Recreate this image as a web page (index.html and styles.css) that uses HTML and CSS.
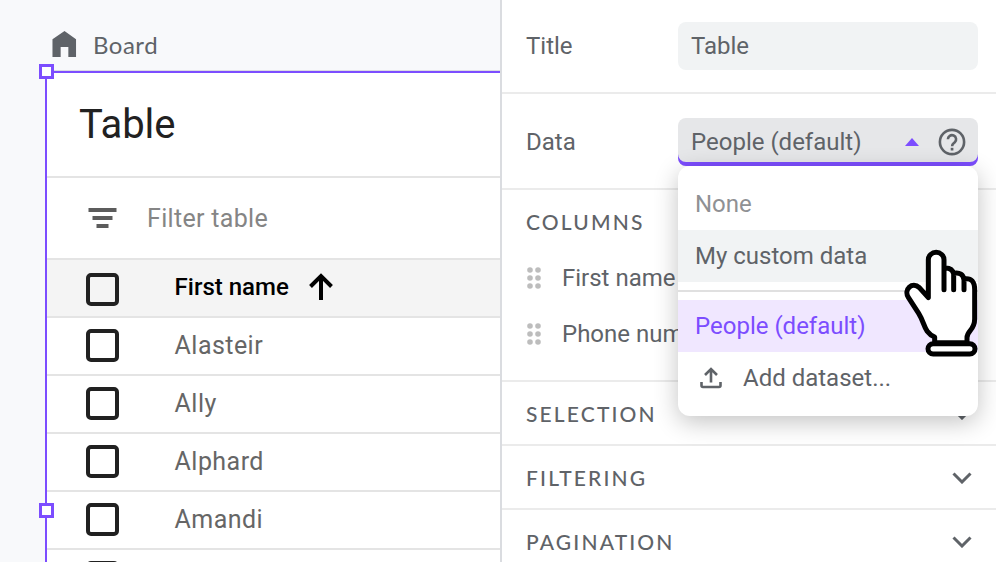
FILE: index.html
```html
<!DOCTYPE html>
<html lang="en">
<head>
<meta charset="utf-8">
<title>Board editor</title>
<link rel="stylesheet" href="styles.css">
</head>
<body>
<div class="app">
  <main class="canvas">
    <div class="crumb">
      <svg class="home" viewBox="0 0 26 28"><path d="M13 .5 25 9v18.500h-8V17H9v10.500H.5V9z"/></svg>
      <span>Board</span>
    </div>
    <section class="table-card">
      <i class="handle handle-corner"></i>
      <i class="handle handle-side"></i>
      <h1 class="table-title"><span>Table</span></h1>
      <div class="filter">
        <svg class="filter-icon" viewBox="0 0 28 20"><path d="M0 0h28v4H0zM4 8h20v4H4zM8 16h12v4H8z"/></svg>
        <span>Filter table</span>
      </div>
      <div class="row head"><i class="box"></i><span class="name">First name</span>
        <svg class="sort" viewBox="0 0 24 28"><path d="M12 27V3M1.500 13.500 12 3l10.500 10.500"/></svg>
      </div>
      <div class="row"><i class="box"></i><span class="name">Alasteir</span></div>
      <div class="row"><i class="box"></i><span class="name">Ally</span></div>
      <div class="row"><i class="box"></i><span class="name">Alphard</span></div>
      <div class="row"><i class="box"></i><span class="name">Amandi</span></div>
      <div class="row"><i class="box"></i></div>
    </section>
  </main>
  <aside class="panel">
    <div class="field field-title"><label>Title</label><div class="input"><span>Table</span></div></div>
    <div class="field">
      <label>Data</label>
      <div class="select">
        <span class="select-value">People (default)</span>
        <svg class="caret" viewBox="0 0 14 8"><path d="M0 8 7 0l7 8z"/></svg>
        <svg class="help" viewBox="0 0 28 28"><circle cx="14" cy="14" r="12.100"/><path d="M9.900 11.300a4.100 4.100 0 1 1 6.900 3c-1.500 1.300-2.700 1.900-2.700 4"/><path class="dot" d="M12.700 19.800h2.700v2.700h-2.700z"/></svg>
        <div class="menu">
          <div class="option muted">None</div>
          <div class="option hovered">My custom data</div>
          <div class="divider"></div>
          <div class="option selected">People (default)</div>
          <div class="option add">
            <svg class="upload" viewBox="0 0 22 22"><path d="M11 15.500V3M5 8l6-6 6 6M1.500 15v3.500q0 1.500 1.500 1.500h16q1.500 0 1.500-1.500V15"/></svg>
            <span>Add dataset...</span>
          </div>
          <svg class="pointer" viewBox="98 82 228 330">
            <path d="M193 366V349C160 335 165 310 145 278L114 230C99 207 126 181 147 201L174 231V117a23.500 22 0 0 1 47 0V207V142Q246 140 250 160V207V158Q278 153 281 178V207V175Q314 169 313 210V295C313 330 290 328 290 351V366z"/>
            <rect x="173" y="369" width="141" height="31" rx="15.500"/>
          </svg>
        </div>
      </div>
    </div>
    <div class="columns">
      <h2>COLUMNS</h2>
      <div class="column"><svg class="grip" viewBox="0 0 14 22"><path d="M3 3h0M11 3h0M3 11h0M11 11h0M3 19h0M11 19h0"/></svg><span>First name</span></div>
      <div class="column"><svg class="grip" viewBox="0 0 14 22"><path d="M3 3h0M11 3h0M3 11h0M11 11h0M3 19h0M11 19h0"/></svg><span>Phone num</span></div>
    </div>
    <div class="section"><h2>SELECTION</h2><svg class="chevron" viewBox="0 0 20 12"><path d="m1.500 1.500 8.500 8.500 8.500-8.500"/></svg></div>
    <div class="section"><h2>FILTERING</h2><svg class="chevron" viewBox="0 0 20 12"><path d="m1.500 1.500 8.500 8.500 8.500-8.500"/></svg></div>
    <div class="section"><h2>PAGINATION</h2><svg class="chevron" viewBox="0 0 20 12"><path d="m1.500 1.500 8.500 8.500 8.500-8.500"/></svg></div>
  </aside>
</div>
</body>
</html>
```
FILE: styles.css
```css
* { box-sizing: border-box; }
body { margin: 0; font-family: Roboto, "Liberation Sans", sans-serif; font-size: 24px; color: #5f6368; }
svg { display: block; flex: none; }
h1, h2 { margin: 0; font-weight: 400; }
.app { display: flex; width: 996px; height: 562px; overflow: hidden; }

.canvas { width: 500px; height: 562px; flex: none; overflow: hidden; background: #f8f9fb; padding: 20px 0 0 45px; }
.crumb { display: flex; align-items: center; gap: 16px; height: 50px; padding: 0 0 2px 7px; font-family: Lato, sans-serif; letter-spacing: .5px; }
.home { width: 25px; height: 28px; fill: #5f6368; }
.table-card { position: relative; width: 480px; height: 700px; background: #fff; border-top: 1px solid #dadce0; border-left: 2px solid #7c4dff; }
.table-card::before { content: ""; display: block; height: 2px; background: #7c4dff; }
.handle { position: absolute; width: 15px; height: 15px; background: #fff; border: 3px solid #7c4dff; }
.handle-corner { left: -8px; top: -7px; }
.handle-side { left: -8px; top: 432px; }
.table-title { height: 105px; border-bottom: 2px solid #e4e4e4; padding: 28px 0 0 32px; font-size: 40px; line-height: 48px; letter-spacing: -.1px; color: #212121; }
.filter { display: flex; align-items: center; gap: 30px; height: 82px; border-bottom: 2px solid #e4e4e4; padding-left: 41px; font-size: 25px; letter-spacing: .32px; color: #858585; }
.filter-icon { width: 29px; height: 20px; fill: #5c5c5c; }
.row { display: flex; align-items: center; height: 58px; border-bottom: 2px solid #e4e4e4; padding: 0 0 2px 39px; font-size: 25px; letter-spacing: .45px; color: #666; }
.row.head { background: #f4f4f4; color: #000; font-size: 24px; font-weight: 500; letter-spacing: 0; }
.box { flex: none; width: 33px; height: 33px; border: 4px solid #212121; border-radius: 5px; margin-right: 55.600px; }
.head .box { position: relative; top: 2px; }
.sort { width: 24px; height: 28px; margin-left: 20px; fill: none; stroke: #000; stroke-width: 4; }

.panel { flex: 1; height: 562px; border-left: 2px solid #dadce0; background: #fff; }
.field { display: flex; align-items: center; height: 96px; border-bottom: 2px solid #ebebeb; padding: 2px 18px 0 24px; }
.field-title { height: 94px; padding-top: 0; }
.field label { width: 152px; }
.input, .select { display: flex; align-items: center; width: 300px; height: 48px; border-radius: 8px; background: #f1f3f4; padding-left: 13px; }
.select { position: relative; background: #e6e7e9; box-shadow: inset 0 -4px #7c4dff; }
.select-value { width: 214px; }
.caret { width: 14px; height: 8px; fill: #7c4dff; }
.help { width: 28px; height: 28px; margin-left: 19px; fill: none; stroke: #5f6368; stroke-width: 2.600; }
.help .dot { fill: #5f6368; stroke: none; }
.menu { position: absolute; z-index: 2; left: 0; top: 48px; width: 300px; height: 250px; padding-top: 12px; background: #fff; border-radius: 12px; box-shadow: 0 6px 24px rgba(0,0,0,.24); }
.option { height: 52px; line-height: 52px; padding-left: 17px; }
.muted { color: #8f9194; }
.hovered { background: #f1f3f4; }
.divider { height: 2px; margin: 8px 0; background: #e0e0e0; }
.selected { background: #f0e7ff; color: #7c4dff; }
.add { display: flex; align-items: center; gap: 21px; padding-left: 22px; }
.upload { width: 22px; height: 22px; fill: none; stroke: #5f6368; stroke-width: 2.600; }
.pointer { position: absolute; left: 224.700px; top: 82px; width: 76px; height: 110px; fill: #fff; stroke: #000; stroke-width: 15; stroke-linejoin: round; stroke-linecap: round; }
h2 { font-family: Lato, sans-serif; font-size: 21px; font-weight: 500; letter-spacing: 2.150px; line-height: 26px; }
.columns { height: 192px; padding: 19px 0 0 24px; border-bottom: 2px solid #ebebeb; }
.columns h2 { margin-bottom: 15px; }
.column { display: flex; align-items: center; gap: 21px; height: 56px; padding-left: 1px; white-space: nowrap; }
.grip { width: 14px; height: 22px; fill: none; stroke: #bdbdbd; stroke-width: 5.600; stroke-linecap: round; }
.section { display: flex; align-items: center; justify-content: space-between; height: 64px; border-bottom: 2px solid #ebebeb; padding: 2px 24px 0; }
.chevron { width: 20px; height: 12px; fill: none; stroke: #5f6368; stroke-width: 3; }
```
